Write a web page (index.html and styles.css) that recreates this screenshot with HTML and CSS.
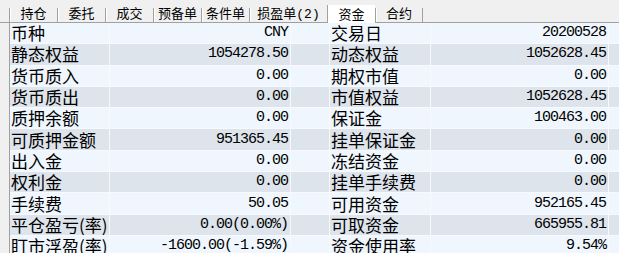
FILE: index.html
```html
<!DOCTYPE html>
<html>
<head>
<meta charset="utf-8">
<link rel="stylesheet" href="styles.css">
</head>
<body>
<div class="app">
  <div class="tabs">
    <div class="tab">持仓</div>
    <div class="tab">委托</div>
    <div class="tab">成交</div>
    <div class="tab">预备单</div>
    <div class="tab">条件单</div>
    <div class="tab wide">损盈单(2)</div>
    <div class="tab active">资金</div>
    <div class="tab last">合约</div>
  </div>
  <div class="grid">
    <div class="row"><div class="lbl">币种</div><div class="val">CNY</div><div class="gap"></div><div class="lbl">交易日</div><div class="val">20200528</div><div class="end"></div></div>
    <div class="row"><div class="lbl">静态权益</div><div class="val">1054278.50</div><div class="gap"></div><div class="lbl">动态权益</div><div class="val">1052628.45</div><div class="end"></div></div>
    <div class="row"><div class="lbl">货币质入</div><div class="val">0.00</div><div class="gap"></div><div class="lbl">期权市值</div><div class="val">0.00</div><div class="end"></div></div>
    <div class="row"><div class="lbl">货币质出</div><div class="val">0.00</div><div class="gap"></div><div class="lbl">市值权益</div><div class="val">1052628.45</div><div class="end"></div></div>
    <div class="row"><div class="lbl">质押余额</div><div class="val">0.00</div><div class="gap"></div><div class="lbl">保证金</div><div class="val">100463.00</div><div class="end"></div></div>
    <div class="row"><div class="lbl">可质押金额</div><div class="val">951365.45</div><div class="gap"></div><div class="lbl">挂单保证金</div><div class="val">0.00</div><div class="end"></div></div>
    <div class="row"><div class="lbl">出入金</div><div class="val">0.00</div><div class="gap"></div><div class="lbl">冻结资金</div><div class="val">0.00</div><div class="end"></div></div>
    <div class="row"><div class="lbl">权利金</div><div class="val">0.00</div><div class="gap"></div><div class="lbl">挂单手续费</div><div class="val">0.00</div><div class="end"></div></div>
    <div class="row"><div class="lbl">手续费</div><div class="val">50.05</div><div class="gap"></div><div class="lbl">可用资金</div><div class="val">952165.45</div><div class="end"></div></div>
    <div class="row"><div class="lbl">平仓盈亏(率)</div><div class="val">0.00(0.00%)</div><div class="gap"></div><div class="lbl">可取资金</div><div class="val">665955.81</div><div class="end"></div></div>
    <div class="row"><div class="lbl">盯市浮盈(率)</div><div class="val">-1600.00(-1.59%)</div><div class="gap"></div><div class="lbl">资金使用率</div><div class="val">9.54%</div><div class="end"></div></div>
  </div>
</div>
</body>
</html>
```

FILE: styles.css
```css
html, body {
  margin: 0;
  padding: 0;
  background: #f0f0f0;
  overflow: hidden;
}
.app {
  width: 619px;
  height: 253px;
  overflow: hidden;
}
.tabs {
  height: 22px;
  padding-left: 9px;
  display: flex;
  align-items: flex-end;
  border-bottom: 1px solid #a0a0a0;
}
.tab {
  width: 48px;
  height: 14px;
  box-sizing: border-box;
  border-left: 1px solid #a0a0a0;
  box-shadow: inset 1px 0 0 #ffffff;
  font-family: "Liberation Mono", "Noto Sans CJK SC", sans-serif;
  font-size: 13px;
  line-height: 14px;
  text-align: center;
  color: #000;
  white-space: nowrap;
}
.tab.wide { width: 78px; }
.tab.active {
  background: #ffffff;
  height: 18px;
  line-height: 22px;
  margin-bottom: -1px;
  box-shadow: none;
}
.tab.last { border-right: 1px solid #a0a0a0; }
.grid {
  margin-left: 9px;
  border-left: 1px solid #a0a0a0;
}
.row {
  display: grid;
  grid-template-columns: 100px 181px 39px 101px 178px 20px;
  height: 21.3px;
  box-sizing: border-box;
  border-bottom: 1px solid #f7f9fc;
  background: #eff6fd;
}
.row:nth-child(even) { background: #dee4ec; }
.row > div {
  border-right: 1px solid #f7f9fc;
  box-sizing: border-box;
  white-space: nowrap;
  display: flex;
  align-items: center;
  color: #000;
}
.lbl {
  font-family: "Noto Sans CJK SC", sans-serif;
  font-size: 17px;
  padding-left: 1px;
  line-height: 20px;
}
.val {
  justify-content: flex-end;
  font-family: "Liberation Mono", monospace;
  font-size: 15px;
  letter-spacing: -1px;
  padding-right: 2px;
  line-height: 20px;
}
```
